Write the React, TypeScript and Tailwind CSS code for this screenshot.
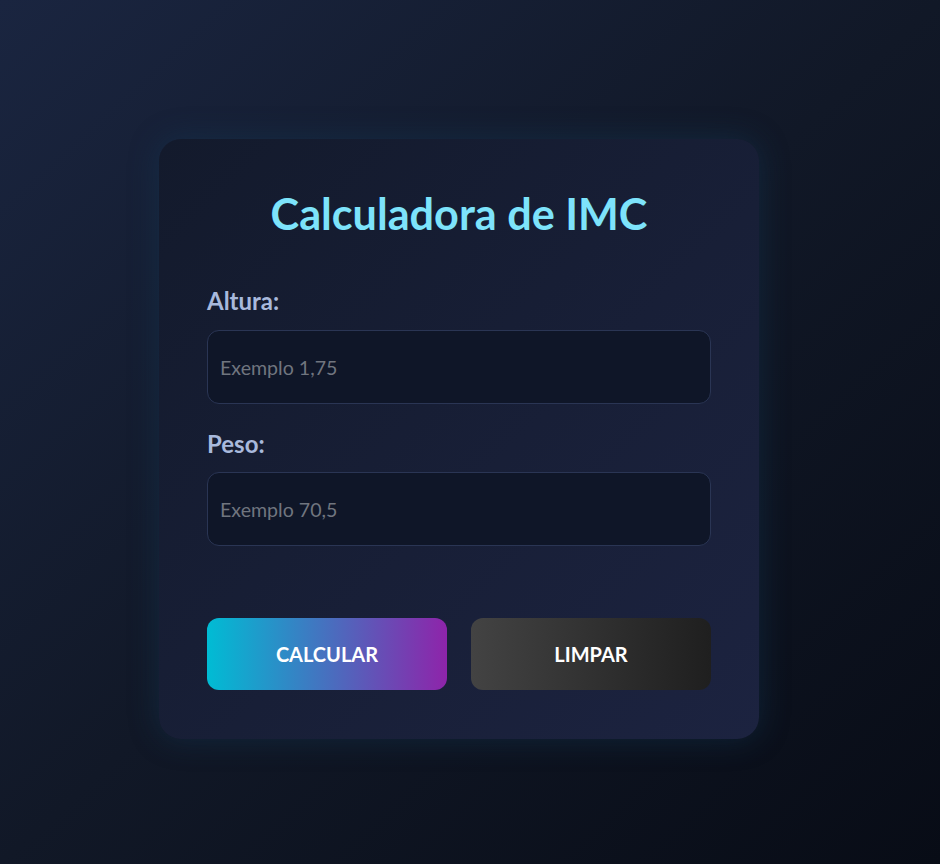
import React, { useState } from "react";

const App = () => {
  const [altura, setAltura] = useState<string>("");
  const [peso, setPeso] = useState<string>("");

  const limpar = () => {
    setAltura("");
    setPeso("");
  };

  return (
    <div
      className="min-h-screen w-full flex items-center justify-center pt-[14px] pr-[22px] bg-linear-to-br/srgb from-[#1a2540] via-[#111827] to-[#080c16]"
      style={{ fontFamily: "Lato, 'Open Sans', sans-serif" }}
    >
      <div className="w-[600px] h-[600px] rounded-[22px] bg-linear-to-br/srgb from-[#131a2c] to-[#1c2340] px-12 pt-12 pb-12 shadow-[0_0_30px_rgba(20,60,90,0.45)]">
        <h1 className="text-center text-[43.2px] font-bold leading-[53px] text-[#7de3fb]">
          Calculadora de IMC
        </h1>

        <form onSubmit={(e) => e.preventDefault()} className="mt-[44px]">
          <label className="block text-[24px] font-bold leading-[34px] text-[#a8b9dc]">
            Altura:
          </label>
          <input
            type="text"
            value={altura}
            onChange={(e) => setAltura(e.target.value)}
            placeholder="Exemplo 1,75"
            className="mt-[12px] w-full h-[74px] rounded-[12px] border border-[#2a3554] bg-[#0f1628] px-3 text-[19.6px] text-gray-200 placeholder:text-[#70757f] outline-none"
          />

          <label className="mt-[23px] block text-[24px] font-bold leading-[34px] text-[#a8b9dc]">
            Peso:
          </label>
          <input
            type="text"
            value={peso}
            onChange={(e) => setPeso(e.target.value)}
            placeholder="Exemplo 70,5"
            className="mt-[11px] w-full h-[74px] rounded-[12px] border border-[#2a3554] bg-[#0f1628] px-3 text-[19.6px] text-gray-200 placeholder:text-[#70757f] outline-none"
          />

          <div className="mt-[72px] grid grid-cols-2 gap-6">
            <button
              type="submit"
              className="h-[72px] rounded-[12px] bg-linear-to-r/srgb from-[#00bcd4] to-[#8e24aa] text-[20px] font-bold uppercase text-white"
            >
              Calcular
            </button>
            <button
              type="button"
              onClick={limpar}
              className="h-[72px] rounded-[12px] bg-linear-to-r/srgb from-[#434343] to-[#1f1f1f] text-[20px] font-bold uppercase text-white"
            >
              Limpar
            </button>
          </div>
        </form>
      </div>
    </div>
  );
};

export default App;
